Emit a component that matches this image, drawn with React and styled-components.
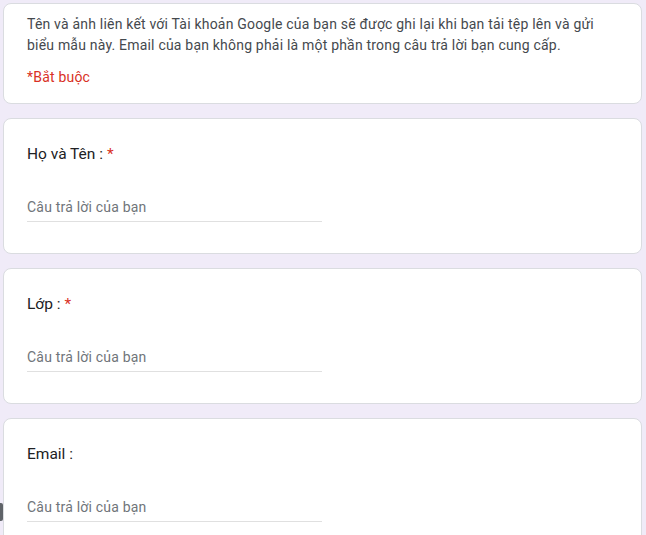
import styled, { createGlobalStyle } from 'styled-components';

const GlobalStyle = createGlobalStyle`
  html, body {
    margin: 0;
    padding: 0;
    background: #f0ebf8;
    font-family: Roboto, "Noto Sans", Arial, sans-serif;
  }
`;

const Page = styled.div`
  position: relative;
  min-height: 535px;
  padding: 3px 4px 0 3px;
  display: flex;
  flex-direction: column;
  gap: 14px;
  overflow: hidden;
  box-sizing: border-box;
`;

const Card = styled.div`
  background: #fff;
  border: 1px solid #dadce0;
  border-radius: 8px;
  padding: ${(p) => (p.$intro ? '10px 23px 15px' : '23px 23px 31px')};
  display: flex;
  flex-direction: column;
`;

const Description = styled.p`
  margin: 0;
  max-width: 575px;
  font-size: 14px;
  line-height: 21px;
  color: #45494e;
  letter-spacing: 0.2px;
`;

const Required = styled.div`
  margin-top: 11px;
  font-size: 14px;
  line-height: 21px;
  color: #d93025;
  letter-spacing: 0.2px;
`;

const Label = styled.div`
  font-size: 15.5px;
  line-height: 24px;
  color: #202124;
`;

const Star = styled.span`
  color: #d93025;
  margin-left: 4px;
`;

const Answer = styled.input`
  margin-top: 31px;
  width: 295px;
  box-sizing: border-box;
  border: none;
  border-bottom: 1px solid #e0e0e0;
  padding: 0 0 4px;
  font-family: inherit;
  font-size: 14px;
  line-height: 20px;
  letter-spacing: 0.2px;
  height: 25px;
  color: #202124;
  outline: none;
  background: transparent;

  &::placeholder {
    color: #70757a;
  }
`;

const EdgeMark = styled.div`
  position: absolute;
  left: 0;
  top: 503px;
  width: 3px;
  height: 18px;
  background: #5f6368;
  border-radius: 0 2px 2px 0;
`;

const questions = [
  { label: 'Họ và Tên :', required: true },
  { label: 'Lớp :', required: true },
  { label: 'Email :', required: false },
];

export default function App() {
  return (
    <>
      <GlobalStyle />
      <Page>
        <Card $intro>
          <Description>
            Tên và ảnh liên kết với Tài khoản Google của bạn sẽ được ghi lại khi bạn tải tệp lên và gửi
            biểu mẫu này. Email của bạn không phải là một phần trong câu trả lời bạn cung cấp.
          </Description>
          <Required>*Bắt buộc</Required>
        </Card>
        {questions.map((q) => (
          <Card key={q.label}>
            <Label>
              {q.label}
              {q.required && <Star>*</Star>}
            </Label>
            <Answer placeholder="Câu trả lời của bạn" />
          </Card>
        ))}
        <EdgeMark />
      </Page>
    </>
  );
}
